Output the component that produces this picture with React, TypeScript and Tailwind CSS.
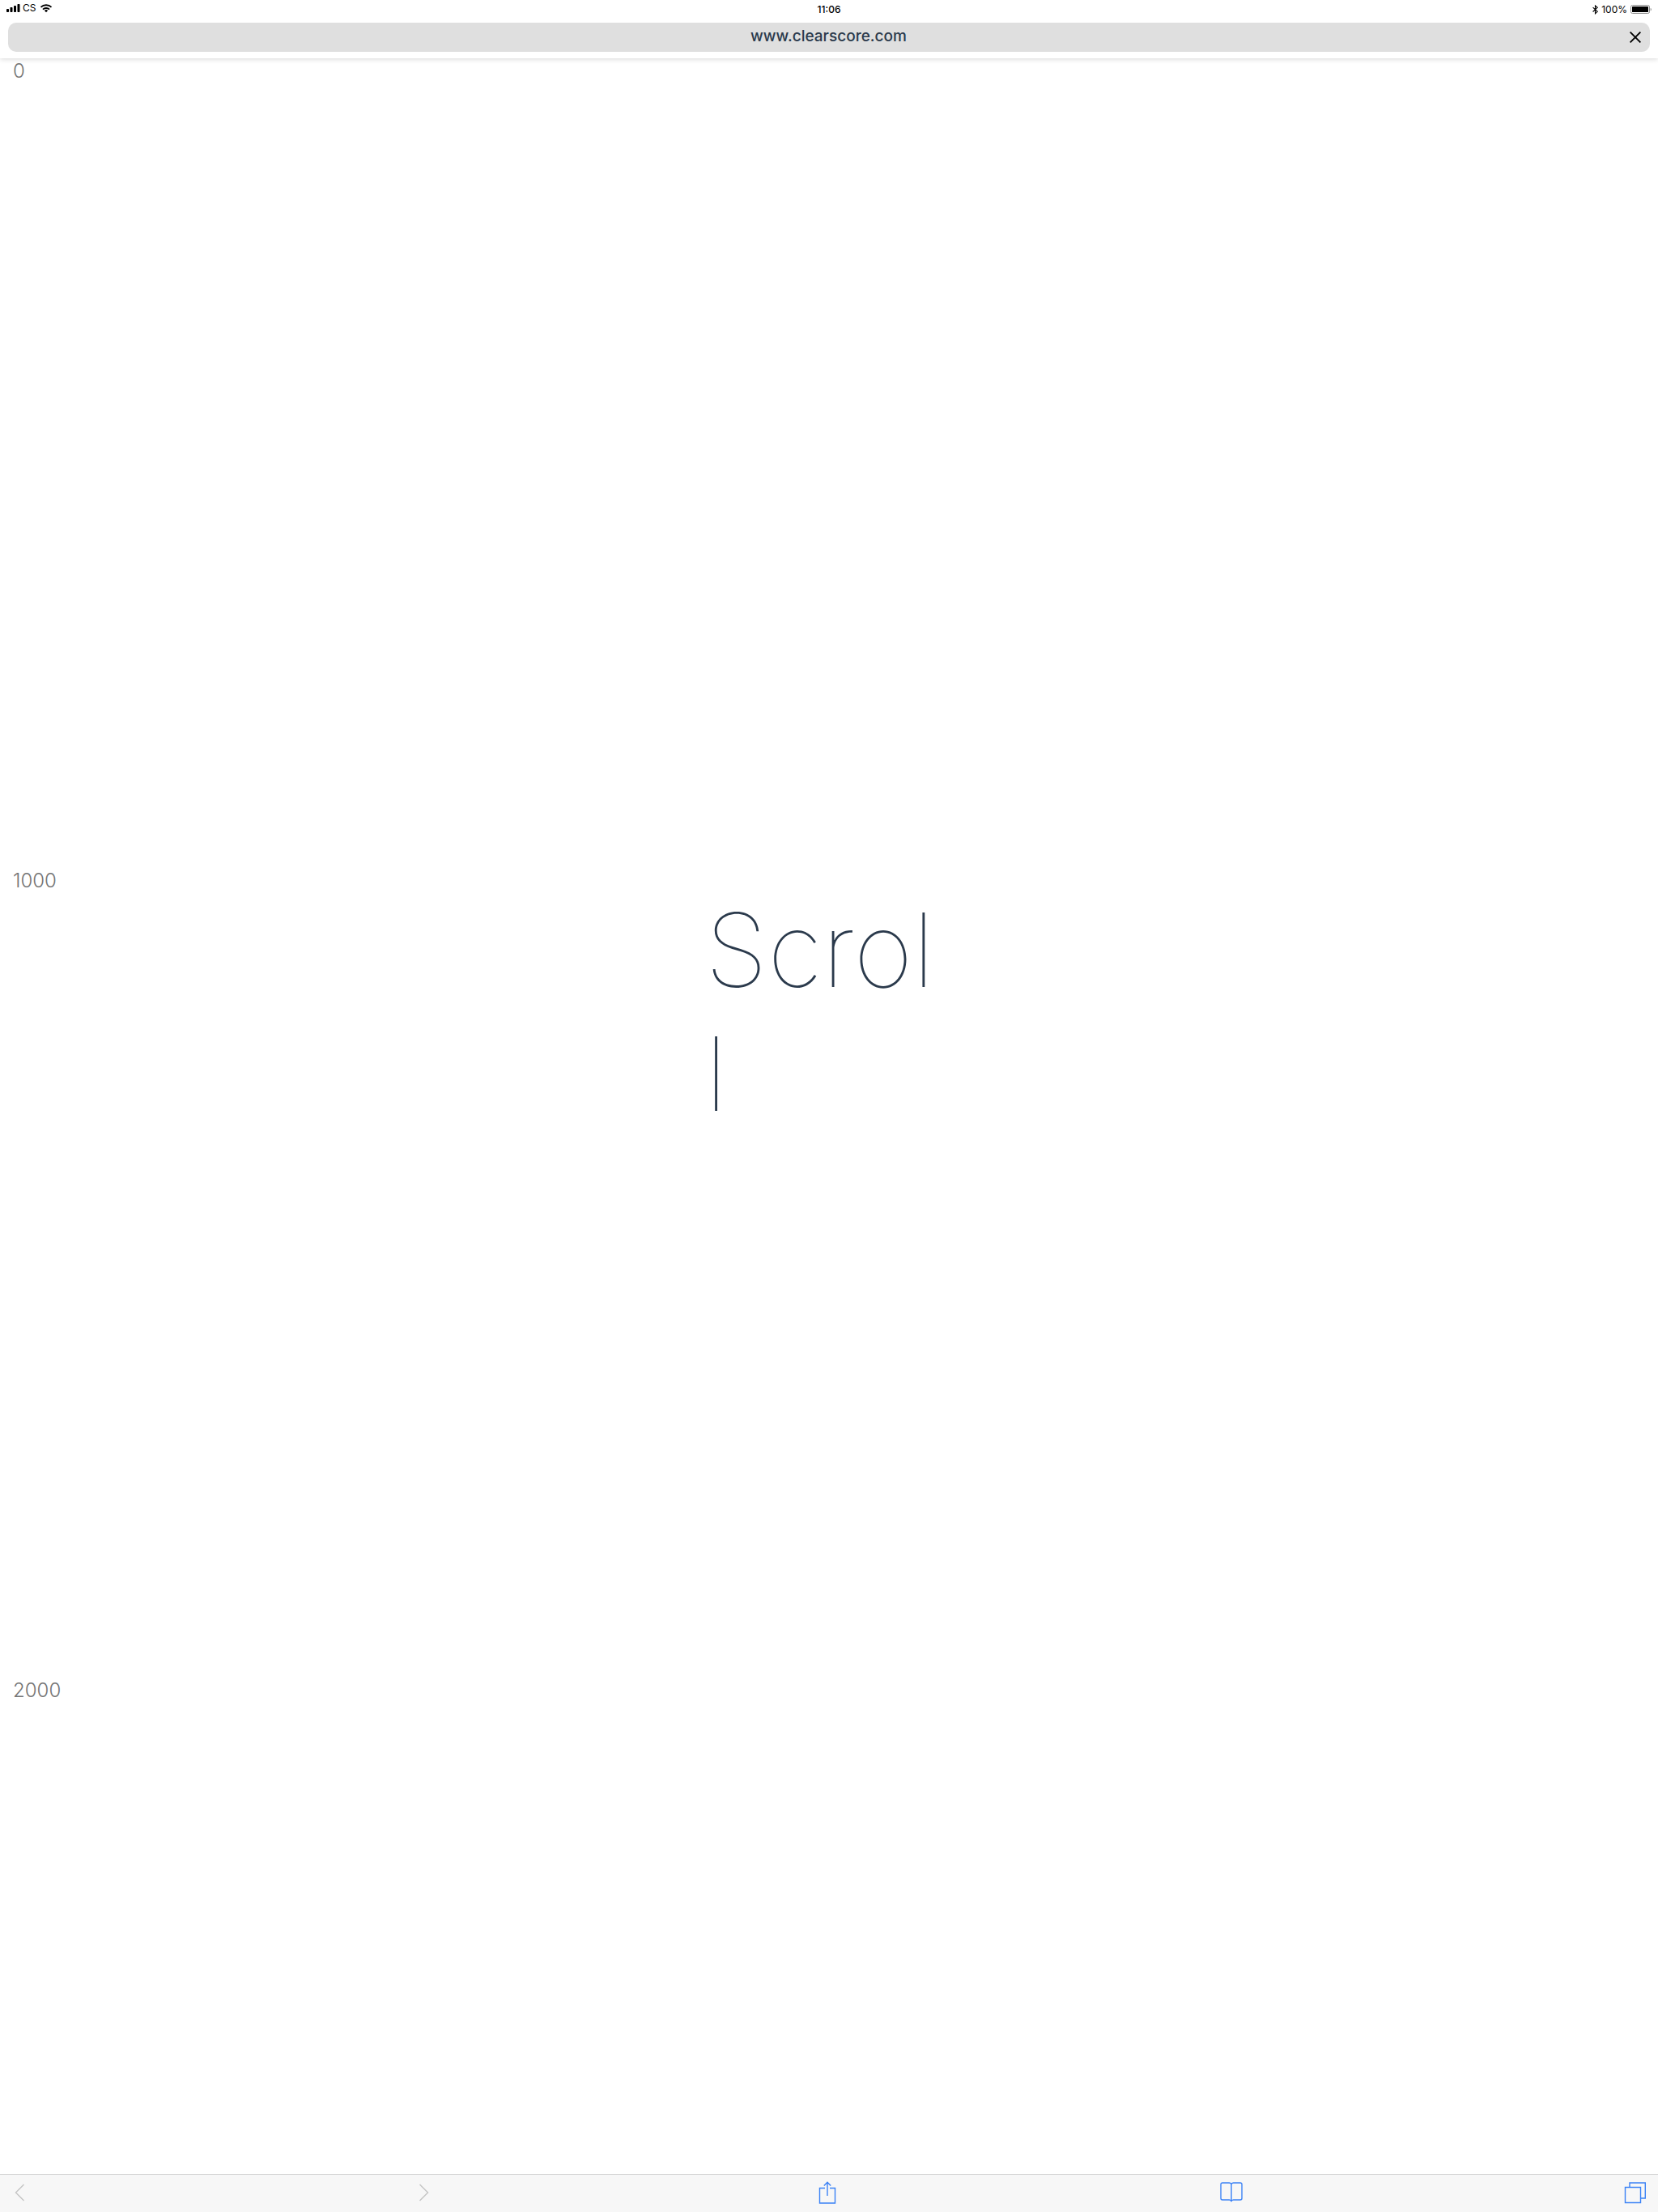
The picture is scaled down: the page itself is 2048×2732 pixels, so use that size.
import React from 'react';

const marks = [0, 1000, 2000];

function StatusBar() {
  return (
    <div className="grid h-7 grid-cols-3 items-start text-black">
      <div className="flex h-5 items-center gap-[3px] pl-2 text-xs">
        <svg width="17" height="11" viewBox="0 0 17 11" aria-label="Signal">
          <rect x="0" y="6" width="3" height="4" rx="0.8" />
          <rect x="4.5" y="4" width="3" height="6" rx="0.8" />
          <rect x="9" y="2" width="3" height="8" rx="0.8" />
          <rect x="13.5" y="0" width="3" height="10" rx="0.8" />
        </svg>
        <span>CS</span>
        <svg className="ml-[2px]" width="16" height="11" viewBox="0 0 16 11" fill="none" stroke="currentColor" strokeWidth="1.9" aria-label="Wi-Fi">
          <path d="M1.5 3.9a9.2 9.2 0 0 1 13 0" />
          <path d="M4 6.7a5.6 5.6 0 0 1 8 0" />
          <path d="M8 10.2 5.9 8.1a3 3 0 0 1 4.2 0Z" fill="currentColor" stroke="none" />
        </svg>
      </div>
      <span className="pt-1 text-center text-xs font-medium">11:06</span>
      <div className="flex h-6 items-center justify-end gap-1 pr-2 text-xs">
        <svg width="7" height="12" viewBox="0 0 7 12" fill="none" stroke="currentColor" strokeWidth="1.1" aria-label="Bluetooth">
          <path d="M0.600 3.200 6.200 8.300 3.500 10.800V1L6.200 3.300 0.600 8.500" />
        </svg>
        <span>100%</span>
        <svg width="26" height="12" viewBox="0 0 26 12" aria-label="Battery">
          <rect x="0.5" y="0.5" width="23" height="10" rx="2" fill="none" stroke="#8c8c8c" />
          <rect x="2" y="2" width="20" height="7" rx="0.5" />
          <path d="M24.700 4v3.400q1.200-.4 1.200-1.700T24.700 4Z" fill="#8c8c8c" />
        </svg>
      </div>
    </div>
  );
}

function ToolButton({ label, children, disabled }: { label: string; children: React.ReactNode; disabled?: boolean }) {
  return (
    <button
      type="button"
      aria-label={label}
      disabled={disabled}
      className="flex h-7 w-7 items-center justify-center text-[#3b82f6] disabled:text-[#c4c4c4]"
    >
      <svg width="28" height="28" viewBox="0 0 28 28" fill="none" stroke="currentColor" strokeWidth="1.4">
        {children}
      </svg>
    </button>
  );
}

export default function App() {
  return (
    <div className="flex h-screen flex-col bg-white font-['Inter','Liberation_Sans',sans-serif]">
      <header className="z-10 bg-white pb-2 shadow-[0_1px_6px_rgba(0,0,0,0.16)]">
        <StatusBar />
        <div className="mx-[10px] flex h-9 items-center rounded-[10px] bg-[#dfdfdf] pr-[11px]">
          <span className="flex-1 pb-[2px] pl-6 text-center text-[19px] leading-7 font-medium text-[#2b3a4c]">www.clearscore.com</span>
          <button type="button" aria-label="Close" className="text-black">
            <svg width="14" height="14" viewBox="0 0 14 14" fill="none" stroke="currentColor" strokeWidth="1.9">
              <path d="M0.600 0.600 13.400 13.400M13.400 0.600 0.600 13.400" />
            </svg>
          </button>
        </div>
      </header>

      <main className="grid min-h-0 flex-1 grid-cols-1 overflow-hidden">
        <ol className="col-start-1 row-start-1">
          {marks.map((m) => (
            <li key={m} className="h-[1000px] px-4 text-2xl leading-8 font-light text-[#757575]">
              {m}
            </li>
          ))}
        </ol>
        <h1 className="col-start-1 row-start-1 mt-[1025px] w-[306px] justify-self-center self-start text-[126px] leading-[153px] font-thin break-all text-[#2b3a4c]">
          Scroll
        </h1>
      </main>

      <nav className="z-10 flex h-[47px] items-center justify-between border-t border-[#d2d2d2] bg-[#f7f7f7] pr-[14px] pb-[2px] pl-[10px]">
        <ToolButton label="Back" disabled>
          <path d="M19.500 4 9.500 14 19.500 24" />
        </ToolButton>
        <ToolButton label="Forward" disabled>
          <path d="M9.500 4 19.500 14 9.500 24" />
        </ToolButton>
        <ToolButton label="Share">
          <path d="M11 8.500H4.500V27H23.500V8.500H17M14 18V1.500M9.800 5.500 14 1.300 18.200 5.500" />
        </ToolButton>
        <ToolButton label="Bookmarks">
          <path d="M14 3.500Q13 2 11.500 2H3Q1 2 1 4V21Q1 23 3 23H11.500Q13.500 23 14 25Q14.500 23 16.500 23H25Q27 23 27 21V4Q27 2 25 2H16.500Q15 2 14 3.500V24" />
        </ToolButton>
        <ToolButton label="Tabs">
          <path d="M1.500 7.500H20.500V26.500H1.500ZM7 7V2H26.300V21H21" />
        </ToolButton>
      </nav>
    </div>
  );
}
